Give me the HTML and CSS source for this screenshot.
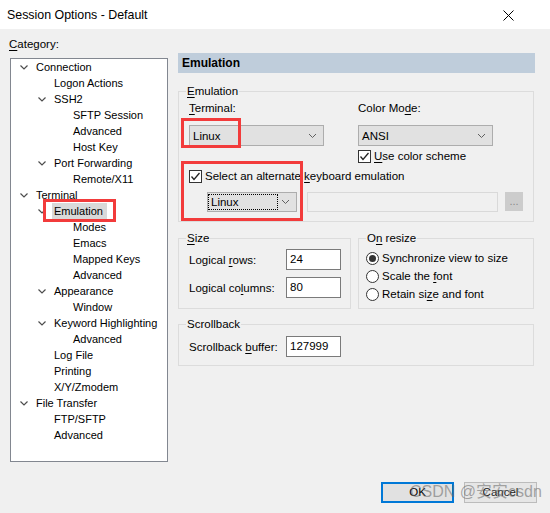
FILE: index.html
```html
<!DOCTYPE html>
<html>
<head>
<meta charset="utf-8">
<title>Session Options - Default</title>
<link rel="stylesheet" href="styles.css">
</head>
<body>
<div class="window">
  <div class="titlebar">
    <span class="title">Session Options - Default</span>
    <svg class="close" width="11" height="11" viewBox="0 0 11 11"><path d="M0.5 0.5 L10.5 10.5 M10.5 0.5 L0.5 10.5" stroke="#000" stroke-width="1" fill="none"/></svg>
  </div>
  <div class="main">
    <div class="left">
      <div class="cat-label"><u>C</u>ategory:</div>
      <div class="tree">
        <div class="node l0"><span class="tw"><svg width="18" height="16"><path d="M2.5 6.5 L6 10 L9.5 6.5" class="chev"/></svg></span><span class="lbl">Connection</span></div>
        <div class="node l1"><span class="tw"></span><span class="lbl">Logon Actions</span></div>
        <div class="node l1"><span class="tw"><svg width="18" height="16"><path d="M2.5 6.5 L6 10 L9.5 6.5" class="chev"/></svg></span><span class="lbl">SSH2</span></div>
        <div class="node l2"><span class="tw"></span><span class="lbl">SFTP Session</span></div>
        <div class="node l2"><span class="tw"></span><span class="lbl">Advanced</span></div>
        <div class="node l2"><span class="tw"></span><span class="lbl">Host Key</span></div>
        <div class="node l1"><span class="tw"><svg width="18" height="16"><path d="M2.5 6.5 L6 10 L9.5 6.5" class="chev"/></svg></span><span class="lbl">Port Forwarding</span></div>
        <div class="node l2"><span class="tw"></span><span class="lbl">Remote/X11</span></div>
        <div class="node l0"><span class="tw"><svg width="18" height="16"><path d="M2.5 6.5 L6 10 L9.5 6.5" class="chev"/></svg></span><span class="lbl">Terminal</span></div>
        <div class="node l1"><span class="tw"><svg width="18" height="16"><path d="M2.5 6.5 L6 10 L9.5 6.5" class="chev"/></svg></span><span class="lbl sel">Emulation</span></div>
        <div class="node l2"><span class="tw"></span><span class="lbl">Modes</span></div>
        <div class="node l2"><span class="tw"></span><span class="lbl">Emacs</span></div>
        <div class="node l2"><span class="tw"></span><span class="lbl">Mapped Keys</span></div>
        <div class="node l2"><span class="tw"></span><span class="lbl">Advanced</span></div>
        <div class="node l1"><span class="tw"><svg width="18" height="16"><path d="M2.5 6.5 L6 10 L9.5 6.5" class="chev"/></svg></span><span class="lbl">Appearance</span></div>
        <div class="node l2"><span class="tw"></span><span class="lbl">Window</span></div>
        <div class="node l1"><span class="tw"><svg width="18" height="16"><path d="M2.5 6.5 L6 10 L9.5 6.5" class="chev"/></svg></span><span class="lbl">Keyword Highlighting</span></div>
        <div class="node l2"><span class="tw"></span><span class="lbl">Advanced</span></div>
        <div class="node l1"><span class="tw"></span><span class="lbl">Log File</span></div>
        <div class="node l1"><span class="tw"></span><span class="lbl">Printing</span></div>
        <div class="node l1"><span class="tw"></span><span class="lbl">X/Y/Zmodem</span></div>
        <div class="node l0"><span class="tw"><svg width="18" height="16"><path d="M2.5 6.5 L6 10 L9.5 6.5" class="chev"/></svg></span><span class="lbl">File Transfer</span></div>
        <div class="node l1"><span class="tw"></span><span class="lbl">FTP/SFTP</span></div>
        <div class="node l1"><span class="tw"></span><span class="lbl">Advanced</span></div>
      </div>
    </div>
    <div class="right">
      <div class="header">Emulation</div>
      <fieldset class="grp emu">
        <legend><u>E</u>mulation</legend>
        <div class="emu-body">
          <div class="emu-top">
            <div class="col col-l">
              <div class="lab"><u>T</u>erminal:</div>
              <div class="combo wide"><span class="ctext">Linux</span><svg class="carr" width="9" height="6"><path d="M1 1 L4.5 4.5 L8 1"/></svg></div>
            </div>
            <div class="col col-r">
              <div class="lab">Color Mo<u>d</u>e:</div>
              <div class="combo wide"><span class="ctext">ANSI</span><svg class="carr" width="9" height="6"><path d="M1 1 L4.5 4.5 L8 1"/></svg></div>
              <div class="check small-gap"><span class="box"><svg width="11" height="11"><path d="M1.5 5.5 L4 8.5 L9.5 2"/></svg></span><span><u>U</u>se color scheme</span></div>
            </div>
          </div>
          <div class="check alt"><span class="box"><svg width="11" height="11"><path d="M1.5 5.5 L4 8.5 L9.5 2"/></svg></span><span>Select an alternate <u>k</u>eyboard emulation</span></div>
          <div class="kb-row">
            <div class="combo kb"><span class="ctext focus">Linux</span><svg class="carr" width="9" height="6"><path d="M1 1 L4.5 4.5 L8 1"/></svg></div>
            <div class="field-dis"></div>
            <div class="dots">...</div>
          </div>
        </div>
      </fieldset>
      <div class="row2">
        <fieldset class="grp size">
          <legend><u>S</u>ize</legend>
          <div class="size-body">
            <div class="frow"><span class="flab">Logical <u>r</u>ows:</span><span class="input">24</span></div>
            <div class="frow second"><span class="flab">Logical co<u>l</u>umns:</span><span class="input">80</span></div>
          </div>
        </fieldset>
        <fieldset class="grp resize">
          <legend>O<u>n</u> resize</legend>
          <div class="resize-body">
            <div class="radio"><span class="circ on"></span><span>Synchronize view to size</span></div>
            <div class="radio"><span class="circ"></span><span>Scale the <u>f</u>ont</span></div>
            <div class="radio"><span class="circ"></span><span>Retain si<u>z</u>e and font</span></div>
          </div>
        </fieldset>
      </div>
      <fieldset class="grp scroll">
        <legend>Scrollback</legend>
        <div class="scroll-body">
          <div class="frow"><span class="flab">Scrollback <u>b</u>uffer:</span><span class="input">127999</span></div>
        </div>
      </fieldset>
    </div>
  </div>
  <div class="buttons">
    <div class="btn ok">OK</div>
    <div class="btn cancel">Cancel</div>
  </div>
  <div class="mark m1"></div>
  <div class="mark m2"></div>
  <div class="mark m3"></div>
  <div class="watermark">CSDN @安安csdn</div>
</div>
</body>
</html>
```
FILE: styles.css
```css
* { box-sizing: border-box; }
html, body { margin: 0; padding: 0; }
body {
  font-family: "Liberation Sans", Arial, "Noto Sans CJK SC", sans-serif;
  font-size: 11px;
  color: #000;
  background: #f0f0f0;
}
u { text-decoration: underline; text-underline-offset: 2px; }
.window {
  position: relative;
  width: 550px;
  height: 513px;
  background: #f0f0f0;
  display: flex;
  flex-direction: column;
  overflow: hidden;
}
.titlebar {
  height: 29px;
  flex: none;
  background: #fff;
  display: flex;
  align-items: center;
  justify-content: space-between;
  padding: 0 36px 0 7px;
}
.title { font-size: 12.4px; line-height: 14px; padding-top: 1px; }
.close { display: block; margin-top: 1px; }

.main { flex: 1; display: flex; }
.left { margin-left: 10px; width: 158px; flex: none; }
.cat-label { padding-top: 8px; line-height: 14px; margin-left: -1px; font-size: 11.5px; }
.tree {
  margin-top: 7px;
  height: 404px;
  border: 1px solid #828790;
  background: #fff;
}
.node { display: flex; align-items: center; height: 16px; line-height: 16px; white-space: nowrap; }
.node.l0 { padding-left: 7px; }
.node.l1 { padding-left: 25px; }
.node.l2 { padding-left: 44px; }
.tw { width: 18px; height: 16px; flex: none; }
.tw svg { display: block; }
.chev { fill: none; stroke: #4d4d4d; stroke-width: 1.2; }
.sel { background: #d9d9d9; padding: 0 4px 0 2px; margin-left: -2px; }

.right { margin-left: 10px; width: 357px; flex: none; }
.header {
  margin-top: 24px;
  height: 20px;
  line-height: 20px;
  background: #bfcddb;
  font-weight: bold;
  font-size: 12px;
  padding-left: 4px;
}
.grp {
  margin: 0;
  padding: 0;
  min-width: 0;
  border: 1px solid #dcdcdc;
}
.grp legend {
  margin-left: 7px;
  padding: 0 1px;
  line-height: 14px;
  font-size: 11.5px;
}
.emu { margin-top: 11px; width: 356px; }
.emu-body { padding: 3px 10px 9px 10px; }
.emu-top { display: flex; }
.col-l { width: 169px; }
.lab { line-height: 14px; height: 14px; font-size: 11.5px; }
.combo {
  margin-top: 10px;
  height: 21px;
  border: 1px solid #adadad;
  background: #e1e1e1;
  display: flex;
  align-items: center;
  justify-content: space-between;
  padding: 0 6px 0 3px;
}
.combo.wide { width: 135px; }
.carr { display: block; fill: none; stroke: #606060; stroke-width: 1; }
.ctext { line-height: 14px; font-size: 11.5px; }
.check { display: flex; align-items: center; height: 13px; line-height: 13px; font-size: 11.5px; }
.check .box {
  width: 13px; height: 13px;
  border: 1px solid #333;
  background: #fff;
  margin-right: 3px;
  flex: none;
}
.check .box svg { display: block; fill: none; stroke: #222; stroke-width: 1.3; }
.small-gap { margin-top: 4px; }
.alt { margin-top: 7px; }
.kb-row { display: flex; margin-top: 9px; margin-left: 18px; align-items: flex-start; }
.combo.kb { margin-top: 0; width: 90px; height: 20px; padding: 0 6px 0 1px; }
.ctext.focus {
  outline: 1px dotted #000;
  outline-offset: 0;
  width: 68px;
  height: 14px;
  padding-left: 2px;
}
.field-dis {
  margin-left: 10px;
  width: 191px;
  height: 20px;
  border: 1px solid #d9d9d9;
  background: #f0f0f0;
}
.dots {
  margin-left: 7px;
  width: 18px;
  height: 19px;
  background: #cccccc;
  border: 1px solid #cccccc;
  color: #8a8a8a;
  text-align: center;
  line-height: 17px;
  font-size: 11px;
}
.row2 { display: flex; gap: 7px; margin-top: 9px; align-items: stretch; width: 356px; }
.size { width: 173px; }
.resize { width: 176px; }
.size-body { padding: 4px 9px 10px 10px; }
.frow { display: flex; align-items: center; height: 21px; font-size: 11.5px; }
.frow.second { margin-top: 7px; }
.flab { width: 97px; flex: none; }
.input {
  width: 55px;
  height: 21px;
  border: 1px solid #7a7a7a;
  background: #fff;
  padding-left: 3px;
  line-height: 19px;
}
.resize-body { padding: 4px 0 0 7px; }
.radio { display: flex; align-items: center; height: 18px; font-size: 11.5px; }
.circ {
  width: 13px; height: 13px;
  border: 1px solid #333;
  border-radius: 50%;
  background: #fff;
  margin-right: 3px;
  flex: none;
  display: flex;
  align-items: center;
  justify-content: center;
}
.circ.on::after {
  content: "";
  width: 7px; height: 7px;
  border-radius: 50%;
  background: #333;
}
.scroll { margin-top: 8px; width: 356px; }
.scroll-body { padding: 5px 10px 8px 10px; }

.buttons {
  flex: none;
  display: flex;
  justify-content: flex-end;
  gap: 10px;
  padding: 0 13px 10px 0;
}
.btn {
  width: 73px;
  height: 21px;
  background: #e1e1e1;
  border: 1px solid #adadad;
  text-align: center;
  line-height: 19px;
  font-size: 11.5px;
}
.btn.ok { border: 2px solid #0078d7; line-height: 17px; }
.btn.cancel { background: #e6e6e6; border-color: #bcbcbc; color: #222; }

.mark { position: absolute; border: 3px solid #f23b3b; }
.m1 { left: 43px; top: 199px; width: 73px; height: 23px; }
.m2 { left: 181px; top: 118px; width: 60px; height: 30px; }
.m3 { left: 181px; top: 161px; width: 122px; height: 60px; }
.watermark {
  position: absolute;
  left: 410px;
  top: 483px;
  font-family: "Liberation Sans", "Noto Sans CJK SC", sans-serif;
  font-size: 16px;
  line-height: 18px;
  color: rgba(100, 100, 100, 0.55);
  white-space: nowrap;
}
```
